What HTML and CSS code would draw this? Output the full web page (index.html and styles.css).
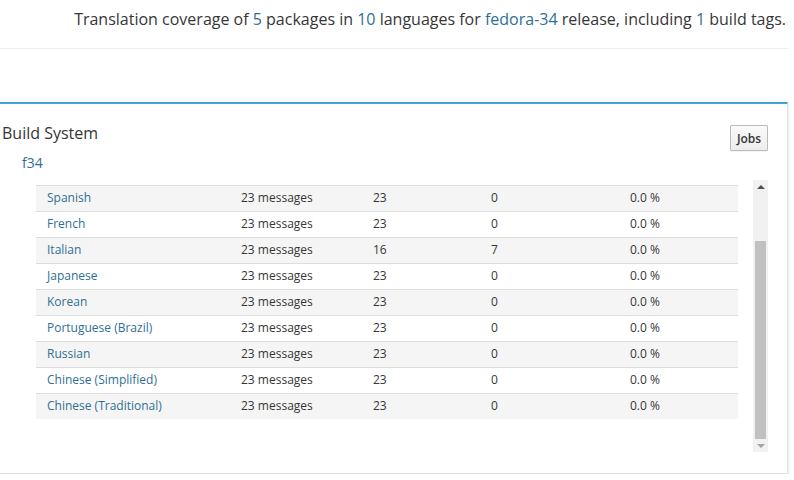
FILE: index.html
```html
<!DOCTYPE html>
<html>
<head>
<meta charset="utf-8">
<link rel="stylesheet" href="styles.css">
</head>
<body>
<div class="page">
  <div class="summary">Translation coverage of <a class="lnk">5</a> packages in <a class="lnk">10</a> languages for <a class="lnk">fedora-34</a> release, including <a class="lnk">1</a> build tags.</div>
  <div class="panel">
    <div class="panel-head">
      <div class="title">Build System</div>
      <button class="btn">Jobs</button>
    </div>
    <div class="tag"><a class="lnk">f34</a></div>
    <div class="scroll-area">
      <div class="viewport">
        <div class="row odd"><a class="lnk">Spanish</a><span>23 messages</span><span>23</span><span>0</span><span>0.0 %</span></div>
        <div class="row"><a class="lnk">French</a><span>23 messages</span><span>23</span><span>0</span><span>0.0 %</span></div>
        <div class="row odd"><a class="lnk">Italian</a><span>23 messages</span><span>16</span><span>7</span><span>0.0 %</span></div>
        <div class="row"><a class="lnk">Japanese</a><span>23 messages</span><span>23</span><span>0</span><span>0.0 %</span></div>
        <div class="row odd"><a class="lnk">Korean</a><span>23 messages</span><span>23</span><span>0</span><span>0.0 %</span></div>
        <div class="row"><a class="lnk">Portuguese (Brazil)</a><span>23 messages</span><span>23</span><span>0</span><span>0.0 %</span></div>
        <div class="row odd"><a class="lnk">Russian</a><span>23 messages</span><span>23</span><span>0</span><span>0.0 %</span></div>
        <div class="row"><a class="lnk">Chinese (Simplified)</a><span>23 messages</span><span>23</span><span>0</span><span>0.0 %</span></div>
        <div class="row odd"><a class="lnk">Chinese (Traditional)</a><span>23 messages</span><span>23</span><span>0</span><span>0.0 %</span></div>
      </div>
      <div class="scrollbar">
        <div class="arrow up"></div>
        <div class="track"><div class="thumb"></div></div>
        <div class="arrow down"></div>
      </div>
    </div>
  </div>
</div>
</body>
</html>
```
FILE: styles.css
```css
html, body {
  margin: 0;
  padding: 0;
  background: #fff;
}
body {
  font-family: "Open Sans", "Noto Sans", sans-serif;
  color: #363636;
}
.page {
  width: 788px;
}
.lnk {
  color: #2f6f93;
  text-decoration: none;
}
.summary {
  font-size: 16px;
  line-height: 20px;
  text-align: right;
  padding: 9px 2px 19px 0;
  border-bottom: 1px solid #ededed;
}
.panel {
  margin-top: 53px;
  border: 1px solid #e3e3e3;
  border-left: none;
  border-top: 2px solid #39a5dc;
  box-shadow: 0 1px 3px rgba(0, 0, 0, 0.14);
  padding: 18px 19px 21px 2px;
  background: #fff;
}
.panel-head {
  display: flex;
  justify-content: space-between;
  align-items: flex-start;
}
.title {
  font-size: 16px;
  line-height: 22px;
}
.btn {
  margin-top: 3px;
  width: 38px;
  height: 26px;
  padding: 0;
  font-family: inherit;
  font-size: 12px;
  font-weight: 600;
  color: #363636;
  border: 1px solid #bbb;
  border-radius: 1px;
  background: linear-gradient(#fafafa, #ededed);
  box-shadow: 0 1px 1px rgba(0, 0, 0, 0.05);
}
.tag {
  margin-top: 2px;
  padding-left: 20px;
  font-size: 14px;
  line-height: 19px;
}
.scroll-area {
  margin-top: 8px;
  margin-left: 34px;
  display: flex;
  gap: 15px;
  height: 272px;
}
.viewport {
  width: 702px;
  padding-top: 5px;
}
.row {
  display: grid;
  grid-template-columns: 194px 132px 118px 139px 1fr;
  align-items: center;
  height: 26px;
  box-sizing: border-box;
  border-top: 1px solid #ddd;
  font-size: 12px;
  line-height: 16px;
  padding-bottom: 2px;
}
.row > * {
  padding-left: 11px;
}
.row.odd {
  background: #f5f5f5;
}
.scrollbar {
  width: 15px;
  background: #f1f1f1;
  display: flex;
  flex-direction: column;
}
.arrow {
  height: 13px;
  display: flex;
  align-items: center;
  justify-content: center;
}
.arrow::before {
  content: "";
  width: 0;
  height: 0;
  border-left: 4px solid transparent;
  border-right: 4px solid transparent;
}
.arrow.up::before {
  border-bottom: 4px solid #505050;
}
.arrow.down::before {
  border-top: 4px solid #a3a3a3;
}
.track {
  flex: 1;
  display: flex;
  flex-direction: column;
  justify-content: flex-end;
  padding: 0 2px;
}
.thumb {
  height: 198px;
  background: #c1c1c1;
}
```
